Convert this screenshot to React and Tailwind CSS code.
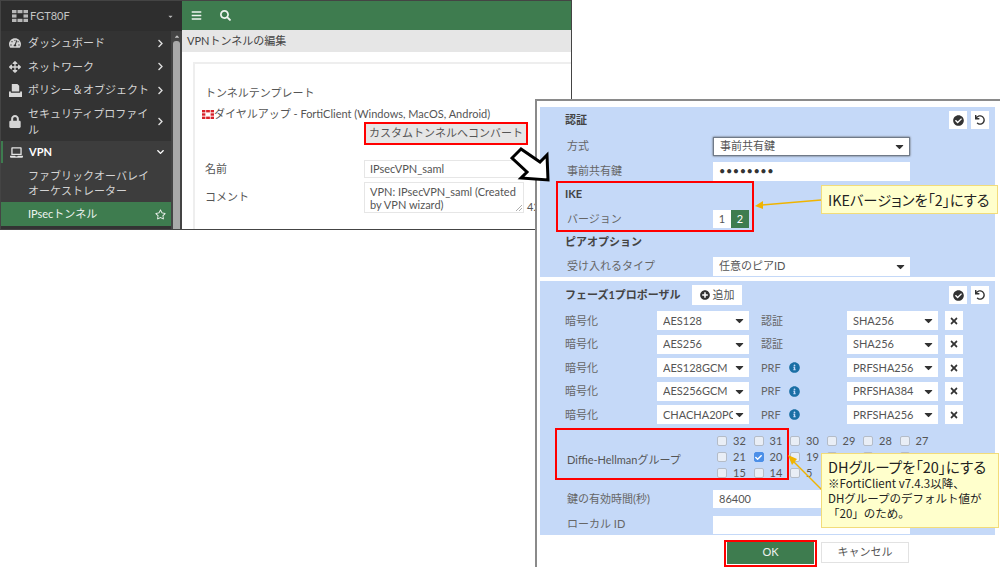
import React from 'react';
import {
  FaBars, FaSearch, FaTachometerAlt, FaArrowsAlt, FaLock, FaLaptop, FaChevronRight, FaChevronDown,
  FaRegStar, FaCheckCircle, FaUndo, FaPlusCircle, FaTimes, FaInfoCircle, FaCaretDown, FaCaretUp, FaCheck,
} from 'react-icons/fa';

const font = 'font-["Lato","Noto_Sans_CJK_JP",sans-serif]';

const FortiLogo = ({ className }) => (
  <svg viewBox="0 0 16 12" className={className} fill="currentColor">
    <rect x="0" y="0" width="4.5" height="3.2" />
    <rect x="5.5" y="0" width="5" height="3.2" />
    <rect x="11.5" y="0" width="4.5" height="3.2" />
    <rect x="0" y="4.4" width="4.5" height="3.2" />
    <rect x="11.5" y="4.4" width="4.5" height="3.2" />
    <rect x="0" y="8.8" width="4.5" height="3.2" />
    <rect x="5.5" y="8.8" width="5" height="3.2" />
    <rect x="11.5" y="8.8" width="4.5" height="3.2" />
  </svg>
);

const PolicyIcon = () => (
  <svg viewBox="0 0 14 14" className="w-[13px] h-[13px] shrink-0 text-[#d8d8d8]" fill="currentColor">
    <path d="M3 0h6l2 2v6H3z" />
    <path d="M0 8h2v1.5h10V8h2v6H0z" />
  </svg>
);

const NavItem = ({ icon, children, h = 'h-6' }) => (
  <div className={`${h} flex items-center pl-[8px] pr-[5px] text-[#d4d4d4] text-[11px] leading-[16px]`}>
    <span className="w-[19px] shrink-0 flex items-center">{icon}</span>
    <span className="flex-1 max-w-[122px]">{children}</span>
    <FaChevronRight className="ml-auto w-[7px] h-[9px] text-[#dddddd] shrink-0 mr-[2px]" />
  </div>
);

const Sidebar = () => (
  <div className="w-[181px] shrink-0 bg-[#333333] flex flex-col">
    <div className="h-[30px] shrink-0 bg-[#2e2e2e] flex items-center pl-[11px] pr-[8px] text-[#c4c4c4] text-[11px]">
      <FortiLogo className="w-[16px] h-[12px] mr-[2px] text-[#b8b8b8]" />
      <span className="flex-1">FGT80F</span>
      <FaCaretDown className="w-[7px] h-[7px] text-[#b8b8b8]" />
    </div>
    <div className="flex-1 flex min-h-0">
      <div className="w-[170px] shrink-0">
        <NavItem icon={<FaTachometerAlt className="w-[12px] h-[12px]" />}>ダッシュボード</NavItem>
        <NavItem icon={<FaArrowsAlt className="w-[12px] h-[12px]" />} h="h-[23px]">ネットワーク</NavItem>
        <NavItem icon={<PolicyIcon />} h="h-[24px]">ポリシー＆オブジェクト</NavItem>
        <NavItem icon={<FaLock className="w-[12px] h-[13px]" />} h="h-[39px]">セキュリティプロファイル</NavItem>
        <div className="h-[22px] flex items-center pl-[7px] pr-[5px] bg-[#3d3d3d] border-l-2 border-[#3e7c4f] text-white text-[11px] font-bold">
          <span className="w-[19px] shrink-0"><FaLaptop className="w-[13px] h-[13px] text-[#e4e4e4]" /></span>
          <span className="flex-1">VPN</span>
          <FaChevronDown className="w-[9px] h-[8px] mr-[1px]" />
        </div>
        <div className="h-[39px] bg-[#3d3d3d] pl-[27px] pr-[6px] flex items-center text-[#d4d4d4] text-[11px] leading-[15px]">
          <span className="max-w-[122px]">ファブリックオーバレイ オーケストレーター</span>
        </div>
        <div className="h-[24px] bg-[#3e7c4f] flex items-center pl-[27px] pr-[5px] text-[#eef3ef] text-[11px]">
          <span className="flex-1">IPsecトンネル</span>
          <FaRegStar className="w-[11px] h-[11px]" />
        </div>
      </div>
      <div className="w-[11px] bg-[#444444] flex flex-col items-center pt-[2px]">
        <FaCaretUp className="w-[8px] h-[7px] text-[#c8c8c8]" />
        <div className="mt-[1px] w-[7px] flex-1 rounded-t-[3px] bg-[#a9a9a9]" />
      </div>
    </div>
  </div>
);

const MainPane = () => (
  <div className="flex-1 min-w-0 flex flex-col bg-white">
    <div className="h-[29px] shrink-0 bg-[#3e7c4f] flex items-center pl-[9px] text-[#eef3ef]">
      <FaBars className="w-[11px] h-[11px]" />
      <FaSearch className="ml-[18px] w-[11px] h-[11px]" />
    </div>
    <div className="h-[22px] shrink-0 bg-[#e6e6e6] flex items-center pl-[5px] text-[11px] text-[#444444]">VPNトンネルの編集</div>
    <div className="flex-1 ml-[11px] mt-[10px] border-t-2 border-l-2 border-[#eeeeee] pl-[10px] text-[11px] text-[#555555]">
      <div className="mt-[19px] leading-[20px]">トンネルテンプレート</div>
      <div className="-ml-[3px] mt-[1px] h-[20px] flex items-center">
        <FortiLogo className="w-[12px] h-[9px] text-[#d8232a]" />
        <span>ダイヤルアップ - FortiClient (Windows, MacOS, Android)</span>
      </div>
      <div className="ml-[159px] w-[164px] h-[23px] -mt-[2px] border-2 border-[#ff0000] bg-[#e6e6e6] flex items-center justify-center text-[#555555]">
        カスタムトンネルへコンバート
      </div>
      <div className="mt-[15px] flex items-center h-[18px]">
        <span className="w-[159px] shrink-0">名前</span>
        <div className="w-[162px] h-[18px] border border-[#e6e6e6] pl-[5px] leading-[16px]">IPsecVPN_saml</div>
      </div>
      <div className="mt-[4px] flex items-center">
        <span className="w-[159px] shrink-0">コメント</span>
        <div className="relative w-[160px] h-[31px] border border-[#e6e6e6] pl-[5px] leading-[13px] pt-[2px]">
          VPN: IPsecVPN_saml (Created by VPN wizard)
          <svg viewBox="0 0 6 6" className="absolute right-[1px] bottom-[1px] w-[6px] h-[6px]">
            <path d="M0 6L6 0M3 6L6 3" stroke="#999" strokeWidth="0.8" />
          </svg>
        </div>
        <span className="ml-[3px] self-end leading-[13px]">42</span>
      </div>
    </div>
  </div>
);

const Select = ({ w, value, focus }) => (
  <div className={`${w} h-[19px] bg-white flex items-center pl-[6px] pr-[3px] text-[11px] text-[#555555] ${focus ? 'border border-[#707a88] shadow-[0_0_2px_#555]' : ''}`}>
    <span className="flex-1 min-w-0 overflow-hidden whitespace-nowrap">{value}</span>
    <FaCaretDown className="w-[13px] h-[13px] shrink-0 text-[#333333]" />
  </div>
);

const IconBtn = ({ children, w = 'w-[18px]' }) => (
  <div className={`${w} h-[18px] bg-white flex items-center justify-center text-[#333333]`}>{children}</div>
);

const Row = ({ h, label, bold, children, extra = '' }) => (
  <div className={`${h} ${extra} flex items-center text-[11px]`}>
    <span className={`w-[148px] shrink-0 ${bold ? 'font-bold text-[#444444]' : 'pl-[2px] text-[#666666]'}`}>{label}</span>
    {children}
  </div>
);

const Proposal = ({ enc, kind, info, hash }) => (
  <div className="h-[23.5px] flex items-center text-[11px] text-[#666666]">
    <span className="w-[92px] shrink-0">暗号化</span>
    <Select w="w-[92px]" value={enc} />
    <span className="ml-[12px] w-[86px] shrink-0 flex items-center">
      {kind}
      {info && <FaInfoCircle className="ml-[8px] w-[11px] h-[11px] text-[#1a6fa5]" />}
    </span>
    <Select w="w-[91px]" value={hash} />
    <div className="ml-[7px] w-[18px] h-[19px] bg-white flex items-center justify-center text-[#333333]">
      <FaTimes className="w-[10px] h-[10px]" />
    </div>
  </div>
);

const Check = ({ n, checked }) => (
  <div className="w-[36.5px] flex items-center text-[11px] text-[#555555]">
    <span className={`w-[10px] h-[10px] rounded-[2px] border flex items-center justify-center ${checked ? 'bg-[#4c8fe8] border-[#4c8fe8]' : 'bg-[#e9eef6] border-[#b4bcc8]'}`}>
      {checked && <FaCheck className="w-[7px] h-[7px] text-white" />}
    </span>
    <span className="ml-[6px]">{n}</span>
  </div>
);

const DialogWindow = () => (
  <div className="absolute left-[535px] top-[99px] w-[465px] h-[468px] bg-white border-2 border-r-0 border-b-0 border-[#8a8a8a] flex flex-col">
    <div className="ml-[3px] mr-[5px] mt-[6px] h-[170px] bg-[#c5d9f8] pl-[25px] pr-[6px]">
      <Row h="h-[26px]" label="認証" bold>
        <div className="ml-auto flex gap-[4px]">
          <IconBtn><FaCheckCircle className="w-[11px] h-[11px]" /></IconBtn>
          <IconBtn><FaUndo className="w-[10px] h-[10px]" /></IconBtn>
        </div>
      </Row>
      <Row h="h-[26px]" label="方式"><Select w="w-[197px]" value="事前共有鍵" focus /></Row>
      <Row h="h-[24px]" label="事前共有鍵">
        <div className="w-[197px] h-[19px] bg-white pl-[6px] flex items-center tracking-[0.5px] text-[#333333] text-[11px]">••••••••</div>
      </Row>
      <Row h="h-[22px]" label="IKE" bold />
      <Row h="h-[28px]" label="バージョン">
        <div className="flex h-[18px]">
          <span className="w-[18px] bg-white text-[#555555] flex items-center justify-center">1</span>
          <span className="w-[18px] bg-[#3e7c4f] text-white flex items-center justify-center">2</span>
        </div>
      </Row>
      <Row h="h-[18px]" label="ピアオプション" bold />
      <Row h="h-[21px]" extra="mt-[5px]" label="受け入れるタイプ"><Select w="w-[197px]" value="任意のピアID" /></Row>
    </div>
    <div className="ml-[3px] mr-[5px] mt-[4px] mb-[2px] flex-1 bg-[#c5d9f8] pl-[25px] pr-[6px] min-h-0 overflow-hidden">
      <div className="h-[28px] flex items-center text-[11px]">
        <span className="font-bold text-[#444444] w-[127px] shrink-0">フェーズ1プロポーザル</span>
        <div className="w-[50px] h-[20px] bg-white flex items-center justify-center text-[#555555]">
          <FaPlusCircle className="w-[10px] h-[10px] text-[#333333] mr-[3px]" />追加
        </div>
        <div className="ml-auto flex gap-[4px]">
          <IconBtn><FaCheckCircle className="w-[11px] h-[11px]" /></IconBtn>
          <IconBtn><FaUndo className="w-[10px] h-[10px]" /></IconBtn>
        </div>
      </div>
      <Proposal enc="AES128" kind="認証" hash="SHA256" />
      <Proposal enc="AES256" kind="認証" hash="SHA256" />
      <Proposal enc="AES128GCM" kind="PRF" info hash="PRFSHA256" />
      <Proposal enc="AES256GCM" kind="PRF" info hash="PRFSHA384" />
      <Proposal enc="CHACHA20POLY1305" kind="PRF" info hash="PRFSHA256" />
      <div className="mt-[6px] pt-[1px] h-[48px] flex items-center text-[11px] text-[#555555]">
        <span className="mt-[7px] w-[152px] shrink-0 pl-[2px]">Diffie-Hellmanグループ</span>
        <div className="w-[225px] flex flex-wrap">
          {['32', '31', '30', '29', '28', '27', '21', '20', '19', '18', '17', '16', '15', '14', '5'].map(n => (
            <div key={n} className="h-[16px] flex"><Check n={n} checked={n === '20'} /></div>
          ))}
        </div>
      </div>
      <Row h="h-[25px]" extra="mt-[6px]" label="鍵の有効時間(秒)">
        <div className="w-[197px] h-[18px] bg-white pl-[6px] text-[#555555] flex items-center">86400</div>
      </Row>
      <Row h="h-[26px]" label="ローカル ID">
        <div className="w-[197px] h-[18px] bg-white" />
      </Row>
    </div>
    <div className="h-[30px] shrink-0 bg-white flex items-center pl-[190px] text-[11px]">
      <div className="w-[87px] h-[24px] bg-[#3e7c4f] text-[#eef3ef] flex items-center justify-center">OK</div>
      <div className="ml-[7px] w-[88px] h-[21px] border border-[#e2e2e2] text-[#555555] flex items-center justify-center">キャンセル</div>
    </div>
  </div>
);

export default function App() {
  return (
    <div className={`relative w-[1000px] h-[567px] overflow-hidden bg-white ${font}`}>
      {/* gui window behind */}
      <div className="absolute left-0 top-0 w-[572px] h-[230px] border border-[#444444] flex overflow-hidden">
        <Sidebar />
        <MainPane />
      </div>

      <DialogWindow />

      {/* arrow between the two windows */}
      <svg className="absolute left-[510px] top-[144px] w-[40px] h-[40px]" viewBox="0 0 40 40">
        <path d="M11 5 L2 14 L17 28 L11 34 L38 36 L37 11 L30 18 Z" fill="#fff" stroke="#000" strokeWidth="3" />
      </svg>

      {/* red highlight boxes */}
      <div className="absolute left-[556px] top-[181px] w-[198px] h-[51px] border-2 border-[#ff0000]" />
      <div className="absolute left-[555px] top-[428px] w-[234px] h-[52px] border-2 border-[#ff0000]" />
      <div className="absolute left-[724px] top-[540px] w-[93px] h-[27px] border-2 border-[#ff0000]" />

      {/* callout arrows */}
      <svg className="absolute left-0 top-0 w-[1000px] h-[567px] pointer-events-none" viewBox="0 0 1000 567">
        <path d="M821 200 L762 205" stroke="#f0b400" strokeWidth="1.5" />
        <path d="M755 206 L763 201 L763 209 Z" fill="#f0b400" />
        <path d="M823 491 L793 461" stroke="#f0b400" strokeWidth="1.5" />
        <path d="M788 455 L797 459 L792 465 Z" fill="#f0b400" />
      </svg>

      {/* callouts */}
      <div className='absolute left-[821px] top-[185px] w-[177px] h-[29px] bg-[#ffffcc] border border-[#f2dc7a] flex items-center pl-[6px] text-[14.3px] text-[#222222] whitespace-nowrap font-["Noto_Sans_CJK_JP",sans-serif] [font-feature-settings:"palt"]'>
        IKEバージョンを「2」にする
      </div>
      <div className='absolute left-[821px] top-[453px] w-[178px] h-[75px] bg-[#ffffcc] border border-[#f2dc7a] pl-[6px] pt-[3px] text-[#222222] whitespace-nowrap font-["Noto_Sans_CJK_JP",sans-serif]'>
        <div className='text-[14.5px] leading-[19px] [font-feature-settings:"palt"]'>DHグループを「20」にする</div>
        <div className="text-[11.5px] leading-[15px]">※FortiClient v7.4.3以降、<br />DHグループのデフォルト値が<br />「20」のため。</div>
      </div>
    </div>
  );
}
